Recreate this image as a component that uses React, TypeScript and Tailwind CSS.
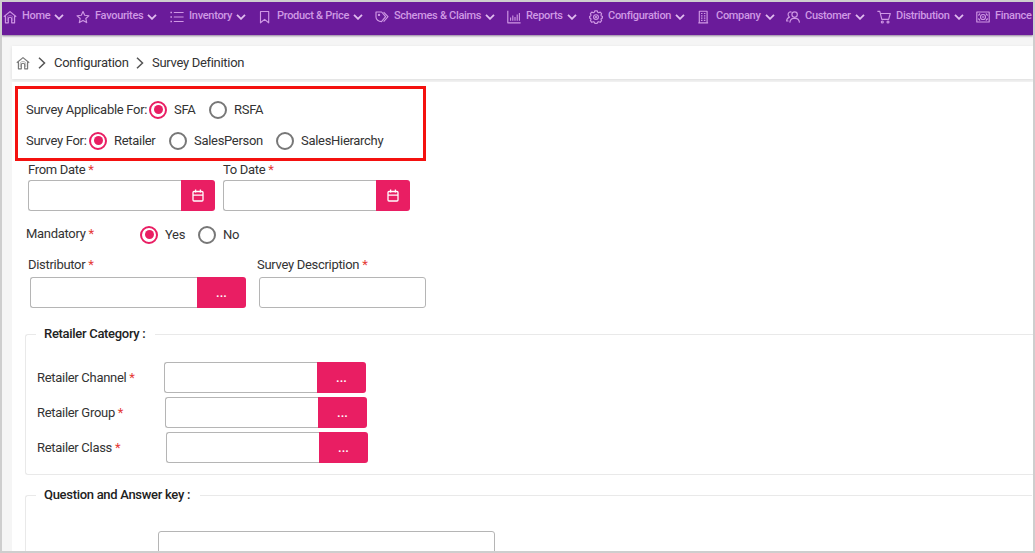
import type { ReactNode } from 'react';

type IconName =
  | 'home'
  | 'star'
  | 'list'
  | 'bookmark'
  | 'tags'
  | 'chart'
  | 'gear'
  | 'building'
  | 'people'
  | 'cart'
  | 'money';

// All drawn on a 14x14 grid.
const icons: Record<IconName, ReactNode> = {
  home: (
    <>
      <path d="M.8 6.8 7 1.6l6.200 5.200" />
      <path d="M2.400 6v6.800h2.900V8.700c0-2 3.400-2 3.400 0v4.100h2.900V6" />
      <path d="M4.200 11V7.800c0-3.200 5.600-3.200 5.600 0V11" strokeWidth="0.5" />
    </>
  ),
  star: <path d="m7 1.500 1.700 3.700 4.200.5-3.100 2.800.9 4.100L7 10.500l-3.700 2.100.9-4.100-3.100-2.800 4.200-.5Z" />,
  list: (
    <>
      <path d="M3.800 2.500h9.800M3.800 7h9.800M3.800 11.500h9.800" />
      <path d="M.4 2.500H2M.4 7H2M.4 11.500H2" strokeWidth="1.500" />
    </>
  ),
  bookmark: <path d="M2.500 1.500h8.200v11.300L6.600 9.400l-4.100 3.400Z" />,
  tags: (
    <>
      <path d="M1 2h5.600l4 4.700L6.500 11.600C3.500 11.600 1 9.500 1 7Z" />
      <path d="M8.600 2.200 13 6.700l-4.400 5" />
      <circle cx="4" cy="4.900" r=".6" />
    </>
  ),
  chart: (
    <>
      <path d="M.8.8v12h12.800" />
      <path d="M3.600 10.800V7.600M5.800 10.800V5.400M8 10.800V7M10.200 10.800V4.600M12.400 10.800V3" strokeWidth="1.100" />
    </>
  ),
  gear: (
    <>
      <path d="M5.800.8h2.400l.5 1.500 1 .4 1.500-.6 1.400 1.600-.6 1.400.3.900 1.400.5v1.400l-1.400.5-.3.900.6 1.400-1.400 1.600-1.500-.6-1 .4-.5 1.300H5.800l-.5-1.300-1-.4-1.500.6-1.400-1.600.6-1.400-.3-.9-1.400-.5V6.500L1.700 6l.3-.9-.6-1.400 1.400-1.600 1.500.6 1-.4Z" />
      <circle cx="7" cy="7.100" r="2.400" />
      <circle cx="7" cy="7.100" r=".5" />
    </>
  ),
  building: (
    <>
      <path d="M2.300 12.800V1.200h7.800v11.600M1.300 12.800h9.800" />
      <path d="M4 3.500h1.500M6.900 3.500h1.500M4 5.800h1.500M6.900 5.800h1.500M4 8.100h1.500M6.900 8.100h1.500M4 10.400h1.500M6.900 10.400h1.500" />
    </>
  ),
  people: (
    <>
      <circle cx="8.600" cy="4.600" r="2.700" />
      <path d="M3.800 12.600c.3-2.900 2-4.300 4-4.300h1.600c2.200 0 3.800 1.400 4.100 4.300" />
      <path d="M5.600 2.200c-2-.8-3.500.5-3.500 2.300 0 1.200.6 2 1.400 2.600C1.800 7.800.7 9 .6 11h1.900" />
    </>
  ),
  cart: (
    <>
      <path d="M.4 1.400h2.400l2 8h6.800l1.700-5.900H3.400" />
      <circle cx="5.300" cy="12" r="1" />
      <circle cx="11" cy="12" r="1" />
    </>
  ),
  money: (
    <>
      <path d="M.8 2h12.400v10H.8Z" />
      <circle cx="7" cy="7" r="2.500" />
      <path d="M7 5.900v2.200M2 5.200c1 0 1.700-.6 1.900-1.800M12 5.200c-1 0-1.700-.6-1.900-1.800M2 8.800c1 0 1.700.6 1.900 1.800M12 8.800c-1 0-1.700.6-1.900 1.800" />
    </>
  ),
};

const navItems: { label: string; icon: IconName; width: string }[] = [
  { label: 'Home', icon: 'home', width: 'w-[73px]' },
  { label: 'Favourites', icon: 'star', width: 'w-[94px]' },
  { label: 'Inventory', icon: 'list', width: 'w-[88px]' },
  { label: 'Product & Price', icon: 'bookmark', width: 'w-[117px]' },
  { label: 'Schemes & Claims', icon: 'tags', width: 'w-[132px]' },
  { label: 'Reports', icon: 'chart', width: 'w-[82px]' },
  { label: 'Configuration', icon: 'gear', width: 'w-[108px]' },
  { label: 'Company', icon: 'building', width: 'w-[89px]' },
  { label: 'Customer', icon: 'people', width: 'w-[91px]' },
  { label: 'Distribution', icon: 'cart', width: 'w-[99px]' },
  { label: 'Finance', icon: 'money', width: 'w-[73px]' },
];

const retailerFields = [
  { label: 'Retailer Channel', offset: 'w-[127px]' },
  { label: 'Retailer Group', offset: 'w-[128px]' },
  { label: 'Retailer Class', offset: 'w-[129px]' },
];

function Icon({ name, className = '' }: { name: IconName; className?: string }) {
  return (
    <svg
      viewBox="0 0 14 14"
      className={`h-3.5 w-3.5 flex-none ${className}`}
      fill="none"
      stroke="currentColor"
      strokeWidth="1.15"
      strokeLinejoin="round"
    >
      {icons[name]}
    </svg>
  );
}

function Chevron() {
  return (
    <svg viewBox="0 0 8 12" className="mx-2 h-3 w-2 flex-none text-[#555]" fill="none" stroke="currentColor" strokeWidth="1.5">
      <path d="m1 .8 5.500 5.200L1 11.200" />
    </svg>
  );
}

function Radio({ label, checked = false }: { label: string; checked?: boolean }) {
  return (
    <label className="flex items-center gap-[7px]">
      <span
        className={`grid h-[18px] w-[18px] flex-none place-items-center rounded-full border-2 ${
          checked ? 'border-[#e91e63]' : 'border-[#777]'
        }`}
      >
        {checked && <span className="h-[9px] w-[9px] rounded-full bg-[#e91e63]" />}
      </span>
      {label}
    </label>
  );
}

function Required({ children }: { children: ReactNode }) {
  return (
    <span>
      {children} <span className="text-[#e53935]">*</span>
    </span>
  );
}

function DateField({ label }: { label: string }) {
  return (
    <div className="w-[187px]">
      <div className="h-[19px] leading-[18px]">
        <Required>{label}</Required>
      </div>
      <div className="flex h-[31px]">
        <input className="w-[153px] rounded-l-[3px] border border-r-0 border-[#b5b5b5] bg-white" />
        <button className="grid w-[34px] place-items-center rounded-r-[3px] bg-[#e91e63] text-white">
          <svg viewBox="0 0 12 13" className="h-[13px] w-3" fill="none" stroke="currentColor" strokeWidth="1.3">
            <rect x="1" y="2.500" width="10" height="9.500" rx="1" />
            <path d="M1 6.200h10M3.600.5v3M8.400.5v3" />
          </svg>
        </button>
      </div>
    </div>
  );
}

function LookupField({ inputWidth }: { inputWidth: string }) {
  return (
    <div className="flex h-[31px]">
      <input className={`${inputWidth} rounded-l-[3px] border border-r-0 border-[#b5b5b5] bg-white`} />
      <button className="w-[49px] rounded-r-[3px] bg-[#e91e63] pb-px font-medium leading-none tracking-normal text-white">
        ...
      </button>
    </div>
  );
}

export default function App() {
  return (
    <div className="h-[553px] w-[1035px] overflow-hidden border-2 border-[#cecece] bg-[#f5f5f5] font-[Roboto,sans-serif] text-[13px] tracking-[-0.3px] text-[#333]">
      <nav className="flex h-[33px] overflow-hidden bg-[#6a1b9a] pl-px text-[11px] font-medium text-[#cf98e4] shadow-[0_1px_2px_#8d7a98]">
        {navItems.map((item) => (
          <div key={item.label} className={`flex h-[29px] flex-none items-center whitespace-nowrap ${item.width}`}>
            <Icon name={item.icon} className="mr-[5px]" />
            {item.label}
            <svg viewBox="0 0 10 6" className="ml-1 h-1.5 w-2.5 flex-none text-[#e0bcee]" fill="none" stroke="currentColor" strokeWidth="1.8">
              <path d="m1 .8 4 4 4-4" />
            </svg>
          </div>
        ))}
      </nav>

      <div className="ml-2.5 mt-[11px] flex h-[33px] items-center bg-white pl-1 shadow-[0_1px_3px_#dcdcdc]">
        <Icon name="home" className="text-[#777]" />
        <Chevron />
        <span className="w-[74px] whitespace-nowrap">Configuration</span>
        <Chevron />
        <span>Survey Definition</span>
      </div>

      <main className="ml-2.5 mt-[3px] h-[480px] bg-white pt-1">
        <section className="ml-[3px] h-[75px] w-[411px] border-[3px] border-[#f4110f] pl-2 pt-[5px]">
          <div className="flex h-[31px] items-center">
            <span className="w-[123px] whitespace-nowrap">Survey Applicable For:</span>
            <div className="flex gap-[14px]">
              <div className="w-[46px]">
                <Radio label="SFA" checked />
              </div>
              <Radio label="RSFA" />
            </div>
          </div>
          <div className="flex h-[31px] items-center">
            <span className="w-[63px] whitespace-nowrap">Survey For:</span>
            <div className="w-20">
              <Radio label="Retailer" checked />
            </div>
            <div className="w-[107px]">
              <Radio label="SalesPerson" />
            </div>
            <Radio label="SalesHierarchy" />
          </div>
        </section>

        <div className="ml-4 flex gap-2">
          <DateField label="From Date" />
          <DateField label="To Date" />
        </div>

        <div className="ml-3.5 flex h-[47px] items-center">
          <div className="w-[114px] pb-0.5">
            <Required>Mandatory</Required>
          </div>
          <div className="w-[58px]">
            <Radio label="Yes" checked />
          </div>
          <Radio label="No" />
        </div>

        <div className="ml-4 flex">
          <div className="w-[229px]">
            <div className="h-[19px] leading-[14px]">
              <Required>Distributor</Required>
            </div>
            <div className="ml-0.5">
              <LookupField inputWidth="w-[167px]" />
            </div>
          </div>
          <div>
            <div className="h-[19px] leading-[14px]">
              <Required>Survey Description</Required>
            </div>
            <input className="ml-0.5 block h-[31px] w-[167px] rounded-[3px] border border-[#b5b5b5] bg-white" />
          </div>
        </div>

        <fieldset className="ml-[13px] mt-[18px] h-[149px] rounded-[3px] rounded-r-none border border-r-0 border-[#e9e9e9] pl-[11px]">
          <legend className="-ml-px h-4 pl-2 pr-2.5 font-medium leading-4 text-[#222]">Retailer Category :</legend>
          <div className="mt-5 flex flex-col gap-1">
            {retailerFields.map((field) => (
              <div key={field.label} className="flex items-center">
                <div className={field.offset}>
                  <Required>{field.label}</Required>
                </div>
                <LookupField inputWidth="w-[153px]" />
              </div>
            ))}
          </div>
        </fieldset>

        <fieldset className="ml-[13px] mr-px mt-3 h-[140px] rounded-l-[3px] border border-r-0 border-[#e9e9e9] pl-[11px]">
          <legend className="-ml-px h-4 pl-2 pr-2.5 font-medium leading-4 text-[#222]">Question and Answer key :</legend>
          <input className="ml-[121px] mt-7 block h-[31px] w-[337px] rounded-[3px] border border-[#b5b5b5] bg-white" />
        </fieldset>
      </main>
    </div>
  );
}
